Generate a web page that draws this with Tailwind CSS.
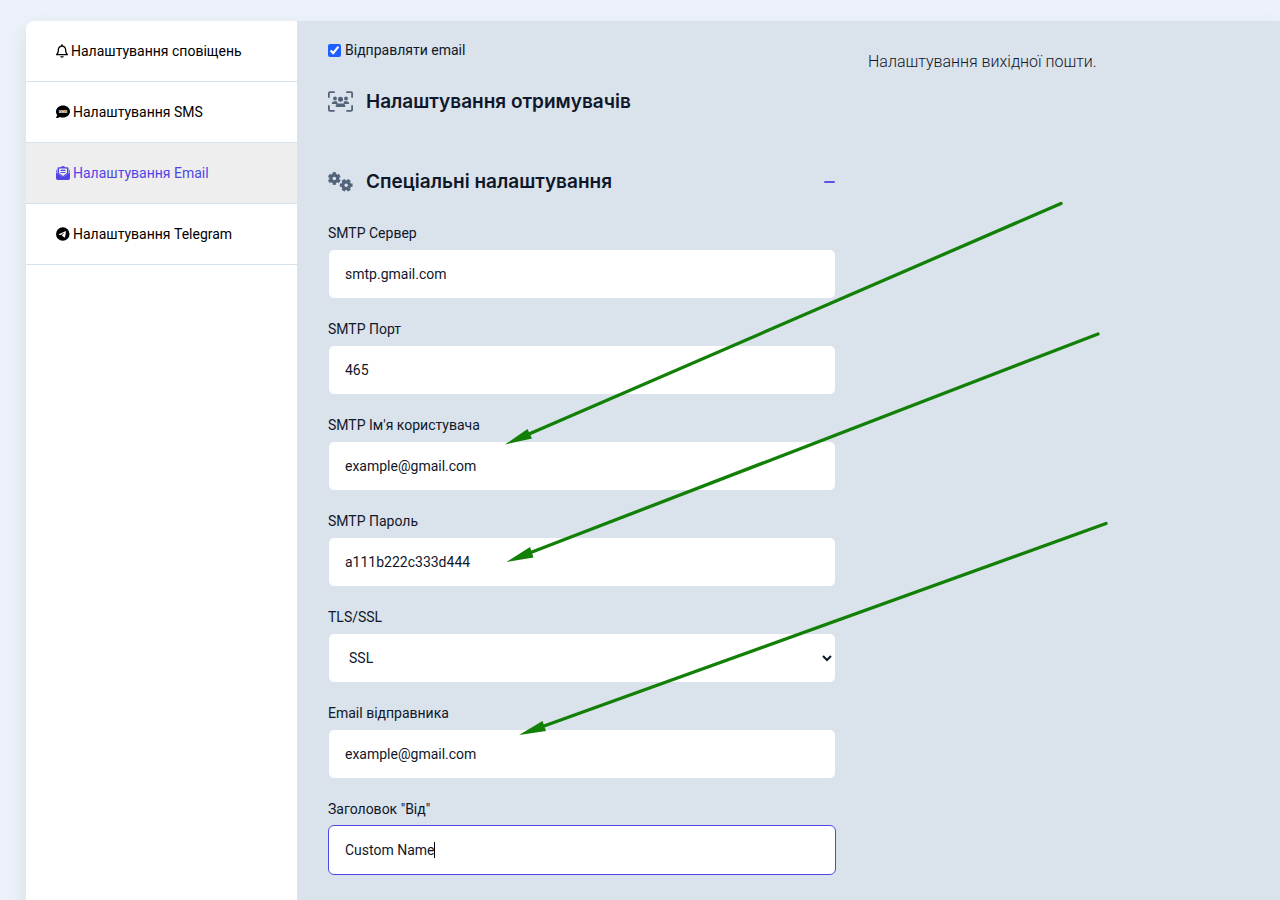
<!DOCTYPE html>
<html lang="uk">
  <head>
    <meta charset="UTF-8" />
    <meta name="viewport" content="width=device-width, initial-scale=1.0" />
    <title>Налаштування Email</title>
    <script src="https://cdn.jsdelivr.net/npm/@tailwindcss/browser@4"></script>
  </head>
  <body class="relative min-h-screen overflow-x-hidden bg-[#ecf1fa] font-['Roboto',sans-serif] text-sm text-[#0f172a]">
    <div class="pt-[21px] pl-[26px]">
      <div class="flex min-h-[calc(100vh-21px)] rounded-tl-lg bg-white shadow-[0_10px_18px_rgba(200,215,205,0.7)]">
        <!-- Sidebar -->
        <nav class="w-[271px] shrink-0 text-black">
          <a href="#notifications" class="flex h-[61px] items-center gap-[3px] border-b border-[#d8e2eb] pl-[30px]">
            <svg class="h-[14px] w-[12px]" viewBox="0 0 448 512" fill="currentColor">
              <path d="M224 0c-17.7 0-32 14.3-32 32V51.2C119 66 64 130.6 64 208v25.4c0 45.4-15.5 89.5-43.8 124.9L5.3 377c-5.8 7.2-6.9 17.1-2.9 25.4S14.8 416 24 416H424c9.2 0 17.6-5.3 21.6-13.6s2.9-18.2-2.9-25.4l-14.9-18.6C399.5 322.9 384 278.8 384 233.4V208c0-77.4-55-142-128-156.8V32c0-17.7-14.3-32-32-32zm0 96c61.9 0 112 50.1 112 112v25.4c0 47.9 13.9 94.6 39.7 134.6H72.3C98.1 328 112 281.3 112 233.4V208c0-61.9 50.1-112 112-112zm64 352H160c0 17 6.7 33.3 18.7 45.3s28.3 18.7 45.3 18.7s33.3-6.7 45.3-18.7s18.7-28.3 18.7-45.3z" />
            </svg>
            Налаштування сповіщень
          </a>
          <a href="#sms" class="flex h-[61px] items-center gap-[3px] border-b border-[#d8e2eb] pl-[30px]">
            <svg class="size-[14px]" viewBox="0 0 14 14">
              <path fill="currentColor" d="M7 .5c3.900 0 7 2.700 7 6s-3.100 6-7 6c-1.100 0-2.200-.2-3.200-.6C2.900 12.500 1.700 13 .5 13c-.5 0-.6-.5-.3-.8.6-.6.900-1.400 1-2.100C.4 9.100 0 8 0 6.500c0-3.300 3.100-6 7-6z" />
              <text x="7" y="8" text-anchor="middle" font-size="4" font-weight="900" fill="white">SMS</text>
            </svg>
            Налаштування SMS
          </a>
          <a href="#email" class="flex h-[61px] items-center gap-[3px] border-b border-[#d8e2eb] bg-[#eee] pl-[30px] text-[#4f46e5]">
            <svg class="size-[14px]" viewBox="0 0 14 14" fill="currentColor">
              <path fill-rule="evenodd" d="M5.600.5Q7-.500 8.400.5L9.300 1.200H11.200Q12.500 1.200 12.500 2.500V7.300L7 11.200L1.500 7.300V2.500Q1.500 1.200 2.800 1.200H4.700zM3.500 2.600Q3 2.600 3 3.100V7L7 10L11 7V3.100Q11 2.600 10.500 2.600z" />
              <path d="M4.500 3.800h5v1.100h-5zM4.500 6h5v1.100h-5zM1 3.600V6.200L0 5.500Q0 4.400 1 3.600zM13 3.600V6.200L14 5.500Q14 4.400 13 3.600zM0 6.300L5.900 10.600Q7 11.300 8.100 10.600L14 6.300V12.300Q14 14 12.300 14H1.700Q0 14 0 12.300z" />
            </svg>
            Налаштування Email
          </a>
          <a href="#telegram" class="flex h-[61px] items-center gap-[3px] border-b border-[#d8e2eb] pl-[30px]">
            <svg class="size-[14px]" viewBox="0 0 512 512" fill="currentColor">
              <path fill-rule="evenodd" d="M248 8a248 248 0 1 0 0 496a248 248 0 1 0 0-496zM363 176.700c-3.700 39.200-19.900 134.400-28.100 178.300-3.500 18.600-10.300 24.800-16.900 25.400-14.400 1.300-25.300-9.500-39.300-18.700-21.800-14.300-34.200-23.200-55.300-37.200-24.500-16.100-8.600-25 5.300-39.500 3.700-3.800 67.100-61.500 68.300-66.700.2-.7.3-3.100-1.200-4.400s-3.600-.8-5.100-.5q-3.300.7-104.600 69.100-14.800 10.200-26.900 9.900c-8.900-.2-25.900-5-38.600-9.100-15.500-5-27.900-7.700-26.800-16.300q.8-6.700 18.500-13.700 108.400-47.200 144.600-62.300c68.900-28.600 83.200-33.600 92.500-33.800 2.100 0 6.600.5 9.600 2.900a10.500 10.500 0 0 1 3.500 6.700A43.800 43.800 0 0 1 363 176.700z" />
            </svg>
            Налаштування Telegram
          </a>
        </nav>

        <!-- Main Content -->
        <main class="flex min-w-0 flex-1 gap-8 bg-[#dae2eb] pt-[19px] pr-8 pb-6 pl-[31px]">
          <form class="w-[508px] min-w-0">
            <label class="flex h-5 items-center gap-1">
              <input type="checkbox" checked class="size-[13px] accent-[#1f5eff]" />
              Відправляти email
            </label>

            <div class="mt-7 flex h-7 items-center gap-3">
              <svg class="h-[22px] w-[26px] text-[#52637a]" viewBox="0 0 26 22" fill="currentColor">
                <path fill="none" stroke="currentColor" stroke-width="1.800" stroke-linecap="round" d="M6 1.200H2Q.9 1.200 .9 2.300V6M19 1.200h4q1.100 0 1.100 1.100V6M6 19.800H2q-1.100 0-1.100-1.100V15M19 19.800h4q1.100 0 1.100-1.100V15" />
                <circle cx="7" cy="7.500" r="1.900" />
                <circle cx="18" cy="7.500" r="1.900" />
                <circle cx="12.500" cy="8.200" r="2.500" />
                <path d="M3.800 13c0-1.700 1.200-2.700 2.700-2.700h1.200c.5 0 1 .1 1.300.3.1 1 .5 1.800 1.100 2.400zM21.200 13c0-1.700-1.200-2.700-2.700-2.700h-1.200c-.5 0-1 .1-1.300.3-.1 1-.5 1.800-1.100 2.400zM7.600 15.300c0-1.500 1.200-2.700 2.900-2.700h4c1.700 0 2.900 1.200 2.900 2.700 0 .5-.3.800-.8.800H8.400c-.5 0-.8-.3-.8-.8z" />
              </svg>
              <h2 class="font-['Inter',sans-serif] text-[19px] font-semibold">Налаштування отримувачів</h2>
            </div>

            <div class="mt-[52px] flex h-7 items-center gap-3">
              <svg class="h-[22px] w-[26px] text-[#52637a]" viewBox="0 0 26 22" fill="none" stroke="currentColor">
                <circle cx="6.300" cy="7.500" r="3.400" stroke-width="3.200" />
                <circle cx="6.300" cy="7.500" r="5.200" stroke-width="2.400" pathLength="12" stroke-dasharray="1.200 .8" stroke-dashoffset="-.4" />
                <circle cx="18.200" cy="14.200" r="3.400" stroke-width="3.200" />
                <circle cx="18.200" cy="14.200" r="5.200" stroke-width="2.400" pathLength="12" stroke-dasharray="1.200 .8" stroke-dashoffset=".6" />
              </svg>
              <h2 class="font-['Inter',sans-serif] text-[19px] font-semibold">Спеціальні налаштування</h2>
              <button type="button" aria-label="Згорнути" class="ml-auto flex h-5 w-[12px] items-center">
                <span class="h-[2px] w-[11px] rounded-sm bg-[#5b53e7]"></span>
              </button>
            </div>

            <div class="mt-[27px] flex flex-col gap-5">
              <div>
                <label for="server" class="block">SMTP Сервер</label>
                <input id="server" type="text" value="smtp.gmail.com" class="mt-[6px] block h-[50px] w-full rounded-md border border-[#dae2eb] bg-white px-4 outline-none" />
              </div>
              <div>
                <label for="port" class="block">SMTP Порт</label>
                <input id="port" type="text" value="465" class="mt-[6px] block h-[50px] w-full rounded-md border border-[#dae2eb] bg-white px-4 outline-none" />
              </div>
              <div>
                <label for="user" class="block">SMTP Ім'я користувача</label>
                <input id="user" type="text" value="example@gmail.com" class="mt-[6px] block h-[50px] w-full rounded-md border border-[#dae2eb] bg-white px-4 outline-none" />
              </div>
              <div>
                <label for="password" class="block">SMTP Пароль</label>
                <input id="password" type="text" value="a111b222c333d444" class="mt-[6px] block h-[50px] w-full rounded-md border border-[#dae2eb] bg-white px-4 outline-none" />
              </div>
              <div>
                <label for="tls" class="block">TLS/SSL</label>
                <select id="tls" class="mt-[6px] block h-[50px] w-full rounded-md border border-[#dae2eb] bg-white pl-4 outline-none">
                  <option>SSL</option>
                  <option>TLS</option>
                </select>
              </div>
              <div>
                <label for="sender" class="block">Email відправника</label>
                <input id="sender" type="text" value="example@gmail.com" class="mt-[6px] block h-[50px] w-full rounded-md border border-[#dae2eb] bg-white px-4 outline-none" />
              </div>
              <div>
                <label for="from" class="block">Заголовок "Від"</label>
                <div class="relative mt-[6px]">
                  <input id="from" type="text" value="Custom Name" class="block h-[50px] w-full rounded-md border border-[#4f46e5] bg-white px-4 caret-transparent outline-none" />
                  <span class="absolute top-[17px] left-[106px] h-4 w-px bg-black"></span>
                </div>
              </div>
            </div>
          </form>

          <p class="flex-1 pt-[10px] text-base font-light">Налаштування вихідної пошти.</p>
        </main>
      </div>
    </div>

    <!-- Arrows pointing at the fields -->
    <svg class="pointer-events-none absolute top-0 left-0 h-[900px] w-[1280px]" viewBox="0 0 1280 900" fill="#128007" stroke="#128007">
      <g stroke-width="3.300" stroke-linecap="round">
        <path d="M1061 203.500L529 434" />
        <path d="M1098 334L532 552" />
        <path d="M1106 523.500L544 726" />
      </g>
      <g stroke="none">
        <path d="M505 444.500L527.500 429L532 438.500z" />
        <path d="M506.500 562L530 547L533.500 557.500z" />
        <path d="M519 735L542.500 721L546 731z" />
      </g>
    </svg>
  </body>
</html>
